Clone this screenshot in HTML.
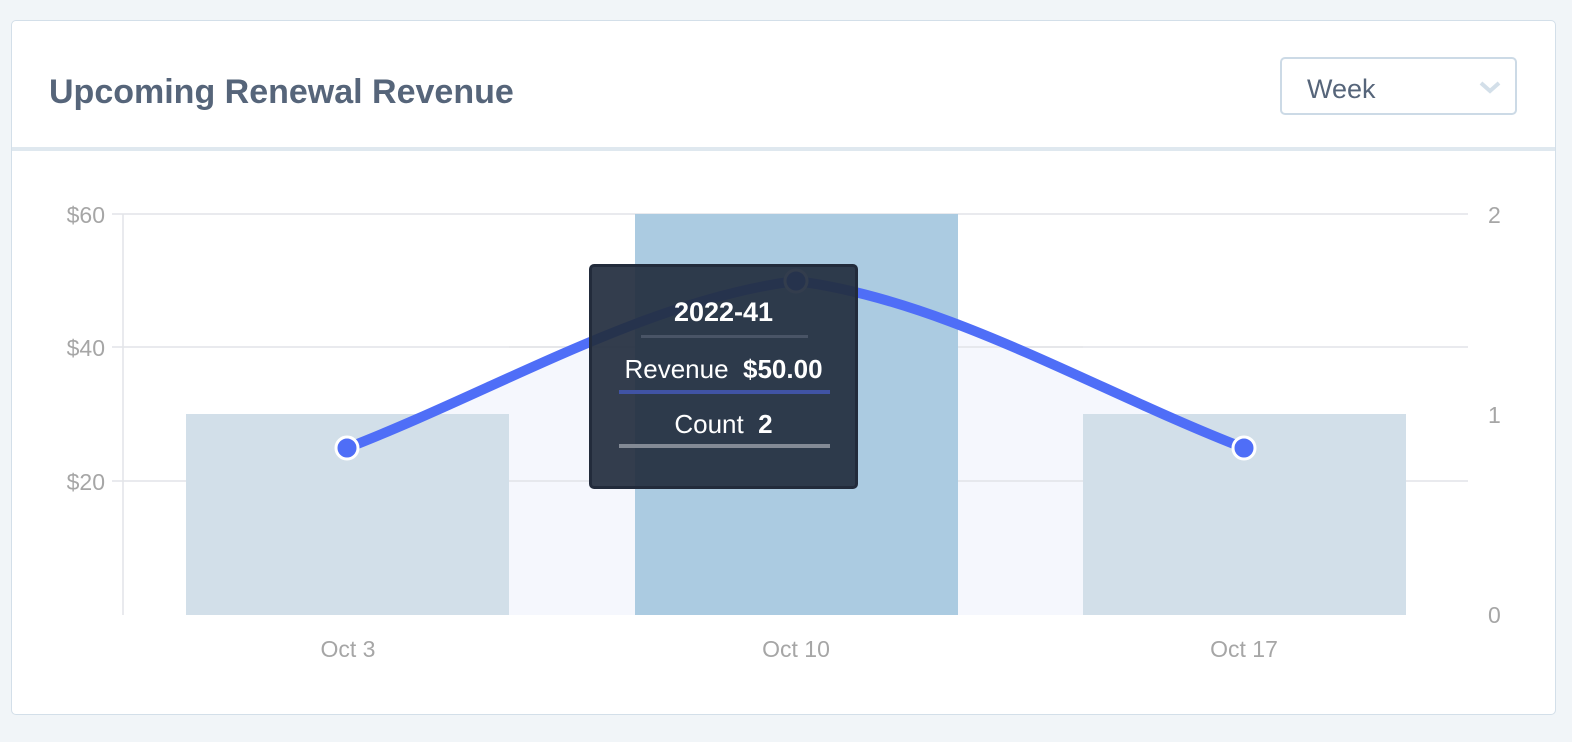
<!DOCTYPE html>
<html><head><meta charset="utf-8"><style>
body{margin:0;width:1572px;height:742px;background:#f1f5f8;font-family:"Liberation Sans",sans-serif;overflow:hidden;position:relative}
.card{position:absolute;left:11px;top:20px;width:1545px;height:695px;background:#fff;border:1px solid #d3dfe9;border-radius:5px;box-sizing:border-box}
.title{position:absolute;left:49px;top:73px;font-size:34px;font-weight:bold;color:#56657a;letter-spacing:0px}
.div{position:absolute;left:12px;top:147px;width:1543px;height:4px;background:#dfe8ef}
.sel{position:absolute;left:1280px;top:57px;width:237px;height:58px;border:2px solid #ccdae6;border-radius:5px;box-sizing:border-box}
.sel span{position:absolute;left:25px;top:15px;font-size:27px;color:#56657a}
.tt{position:absolute;left:589px;top:264px;width:269px;height:225px;background:rgba(35,46,64,0.93);border:3px solid #222b3b;border-radius:5px;box-sizing:border-box;color:#fff;text-align:center}
</style></head><body>
<div class="card"></div>
<div class="title">Upcoming Renewal Revenue</div>
<div class="sel"><span>Week</span>
<svg style="position:absolute;left:196px;top:20px" width="24" height="16"><path d="M3 4 L12 12 L21 4" fill="none" stroke="#d3dfe9" stroke-width="4"/></svg></div>
<div class="div"></div>
<svg width="1572" height="742" style="position:absolute;left:0;top:0">
<g stroke="#e2e4e8" stroke-width="1.5">
<line x1="112" y1="214" x2="1468" y2="214"/><line x1="112" y1="347" x2="1468" y2="347"/><line x1="112" y1="481" x2="1468" y2="481"/><line x1="123" y1="214" x2="123" y2="615"/>
</g>
<path d="M347,448 C497,390 646,300 796,281 C946,300 1094,390 1244,448 L1244,615 L347,615 Z" fill="#f5f7fd"/>
<g stroke="#e2e4e8" stroke-width="1.5"><line x1="509" y1="481" x2="1083" y2="481"/><line x1="509" y1="347" x2="1083" y2="347"/></g>
<rect x="186" y="414" width="323" height="201" fill="#d2dfe9"/>
<rect x="635" y="214" width="323" height="401" fill="#abcbe1"/>
<rect x="1083" y="414" width="323" height="201" fill="#d2dfe9"/>
<path d="M347,448 C497,390 646,300 796,281 C946,300 1094,390 1244,448" fill="none" stroke="#4f6ef7" stroke-width="10"/>
<circle cx="347" cy="448" r="11" fill="#4f6ef7" stroke="#fff" stroke-width="3"/>
<circle cx="1244" cy="448" r="11" fill="#4f6ef7" stroke="#fff" stroke-width="3"/>
<circle cx="796" cy="281" r="11" fill="#4f6ef7" stroke="#fff" stroke-width="3"/>
<g font-family="Liberation Sans" font-size="23" fill="#a6a6a6">
<text x="105" y="223" text-anchor="end">$60</text><text x="105" y="356" text-anchor="end">$40</text><text x="105" y="490" text-anchor="end">$20</text>
<text x="1488" y="223">2</text><text x="1488" y="423">1</text><text x="1488" y="623">0</text>
<text x="348" y="657" text-anchor="middle">Oct 3</text><text x="796" y="657" text-anchor="middle">Oct 10</text><text x="1244" y="657" text-anchor="middle">Oct 17</text>
</g>
</svg>
<div class="tt">
<div style="position:absolute;left:0;right:0;top:30px;font-size:27px;font-weight:bold">2022-41</div>
<div style="position:absolute;left:49px;width:167px;top:68px;height:3px;background:#495466"></div>
<div style="position:absolute;left:0;right:0;top:87px;font-size:26px">Revenue&nbsp; <b>$50.00</b></div>
<div style="position:absolute;left:27px;width:211px;top:123px;height:4px;background:#4053a4"></div>
<div style="position:absolute;left:0;right:0;top:142px;font-size:26px">Count&nbsp; <b>2</b></div>
<div style="position:absolute;left:27px;width:211px;top:177px;height:4px;background:#838a95"></div>
</div>
</body></html>
